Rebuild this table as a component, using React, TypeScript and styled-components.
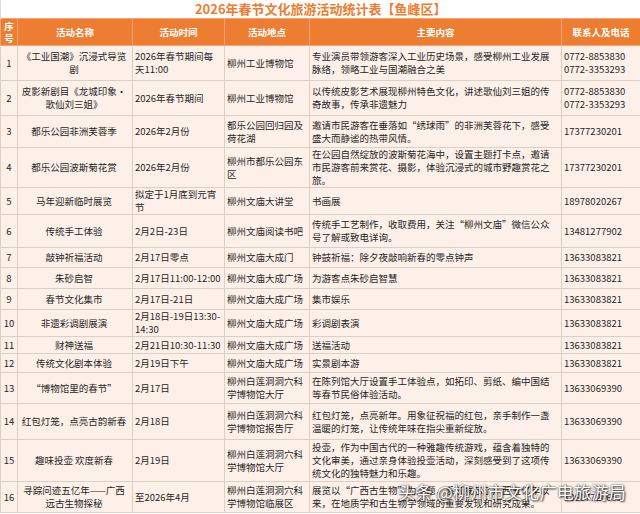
import styled, { createGlobalStyle } from "styled-components";

const GlobalStyle = createGlobalStyle`
  html, body {
    margin: 0;
    padding: 0;
    background: #ffffff;
  }
  body {
    font-family: "Noto Sans CJK SC", "Noto Sans", sans-serif;
  }
`;

const Page = styled.div`
  position: relative;
  width: 640px;
  height: 514px;
  overflow: hidden;
  background: #ffffff;
`;

const Table = styled.table`
  width: 640px;
  table-layout: fixed;
  border-collapse: collapse;
  font-size: 9.5px;
  line-height: 13px;
  color: #262626;
`;

const TitleCell = styled.td`
  height: 18px;
  padding: 0;
  text-align: center;
  font-size: 13px;
  line-height: 18px;
  font-weight: 700;
  color: #ed7d31;
  background: #ffffff;
  border-left: 1px solid #d9d9d9;
`;

const HeadCell = styled.th`
  height: 26px;
  padding: 0 2px;
  background: #ed7d31;
  color: #ffffff;
  font-weight: 700;
  text-align: center;
  vertical-align: middle;
  border: 1px solid #f2a474;
  line-height: 12px;
`;

const Cell = styled.td<{ $align?: "left" | "center"; $tight?: boolean }>`
  padding: ${(p) => (p.$tight ? "0 2px" : "0 4px 0 2px")};
  background: #fdf0e8;
  border: 1px solid #dccfc6;
  text-align: ${(p) => p.$align ?? "left"};
  vertical-align: middle;
  word-break: ${(p) => (p.$tight ? "break-all" : "normal")};
  overflow: hidden;
`;

const Watermark = styled.div`
  position: absolute;
  right: 14px;
  bottom: 12px;
  font-family: "Noto Sans CJK SC", sans-serif;
  font-size: 17px;
  line-height: 20px;
  color: #ffffff;
  letter-spacing: 0.3px;
  text-shadow: 0 0 2px rgba(0, 0, 0, 0.85), 1px 1px 2px rgba(0, 0, 0, 0.7);
  white-space: nowrap;
`;

type Row = {
  h: number;
  name: string;
  time: string;
  place: string;
  content: string;
  phone: string[];
};

const rows: Row[] = [
  {
    h: 35,
    name: "《工业国潮》沉浸式导览剧",
    time: "2026年春节期间每天11:00",
    place: "柳州工业博物馆",
    content: "专业演员带领游客深入工业历史场景，感受柳州工业发展脉络，领略工业与国潮融合之美",
    phone: ["0772-8853830", "0772-3353293"],
  },
  {
    h: 35,
    name: "皮影新剧目《龙城印象·歌仙刘三姐》",
    time: "2026年春节期间",
    place: "柳州工业博物馆",
    content: "以传统皮影艺术展现柳州特色文化，讲述歌仙刘三姐的传奇故事，传承非遗魅力",
    phone: ["0772-8853830", "0772-3353293"],
  },
  {
    h: 32,
    name: "都乐公园非洲芙蓉季",
    time: "2026年2月份",
    place: "都乐公园回归园及荷花湖",
    content: "邀请市民游客在垂落如“绣球雨”的非洲芙蓉花下，感受盛大而静谧的热带风情。",
    phone: ["17377230201"],
  },
  {
    h: 39,
    name: "都乐公园波斯菊花赏",
    time: "2026年2月份",
    place: "柳州市都乐公园东区",
    content: "在公园自然绽放的波斯菊花海中，设置主题打卡点，邀请市民游客前来赏花、摄影，体验沉浸式的城市野趣赏花之旅。",
    phone: ["17377230201"],
  },
  {
    h: 25,
    name: "马年迎新临时展览",
    time: "拟定于1月底到元宵节",
    place: "柳州文庙大讲堂",
    content: "书画展",
    phone: ["18978020267"],
  },
  {
    h: 33,
    name: "传统手工体验",
    time: "2月2日-23日",
    place: "柳州文庙阅读书吧",
    content: "传统手工艺制作，收取费用，关注“柳州文庙”微信公众号了解或致电详询。",
    phone: ["13481277902"],
  },
  {
    h: 20,
    name: "敲钟祈福活动",
    time: "2月17日零点",
    place: "柳州文庙大成门",
    content: "钟鼓祈福：除夕夜敲响新春的零点钟声",
    phone: ["13633083821"],
  },
  {
    h: 21,
    name: "朱砂启智",
    time: "2月17日11:00-12:00",
    place: "柳州文庙大成广场",
    content: "为游客点朱砂启智慧",
    phone: ["13633083821"],
  },
  {
    h: 21,
    name: "春节文化集市",
    time: "2月17日-21日",
    place: "柳州文庙大成广场",
    content: "集市娱乐",
    phone: ["13633083821"],
  },
  {
    h: 27,
    name: "非遗彩调剧展演",
    time: "2月18日-19日13:30-14:30",
    place: "柳州文庙大成广场",
    content: "彩调剧表演",
    phone: ["13633083821"],
  },
  {
    h: 17,
    name: "财神送福",
    time: "2月21日10:30-11:30",
    place: "柳州文庙大成广场",
    content: "送福活动",
    phone: ["13633083821"],
  },
  {
    h: 19,
    name: "传统文化剧本体验",
    time: "2月19日下午",
    place: "柳州文庙大成广场",
    content: "实景剧本游",
    phone: ["13633083821"],
  },
  {
    h: 31,
    name: "“博物馆里的春节”",
    time: "2月17日",
    place: "柳州白莲洞洞穴科学博物馆大厅",
    content: "在陈列馆大厅设置手工体验点，如拓印、剪纸、编中国结等春节民俗体验活动。",
    phone: ["13633069390"],
  },
  {
    h: 36,
    name: "红包灯笼，点亮古韵新春",
    time: "2月18日",
    place: "柳州白莲洞洞穴科学博物馆报告厅",
    content: "红包灯笼，点亮新年。用象征祝福的红包，亲手制作一盏温暖的灯笼，让传统年味在指尖重新绽放。",
    phone: ["13633069390"],
  },
  {
    h: 42,
    name: "趣味投壶 欢度新春",
    time: "2月19日",
    place: "柳州白莲洞洞穴科学博物馆大厅",
    content: "投壶，作为中国古代的一种雅趣传统游戏，蕴含着独特的文化审美，通过亲身体验投壶活动，深刻感受到了这项传统文化的独特魅力和乐趣。",
    phone: ["13633069390"],
  },
  {
    h: 31,
    name: "寻踪问迹五亿年——广西远古生物探秘",
    time: "至2026年4月",
    place: "柳州白莲洞洞穴科学博物馆临展区",
    content: "展览以“广西古生物”为主题，系统展示了广西五亿年以来，在地质学和古生物学领域的重要发现和研究成果。",
    phone: ["13607720651"],
  },
];

export default function App() {
  return (
    <Page>
      <GlobalStyle />
      <Table>
        <colgroup>
          <col style={{ width: 17 }} />
          <col style={{ width: 115 }} />
          <col style={{ width: 92 }} />
          <col style={{ width: 85 }} />
          <col style={{ width: 252 }} />
          <col style={{ width: 79 }} />
        </colgroup>
        <tbody>
          <tr>
            <TitleCell colSpan={6}>2026年春节文化旅游活动统计表【鱼峰区】</TitleCell>
          </tr>
          <tr>
            <HeadCell>序号</HeadCell>
            <HeadCell>活动名称</HeadCell>
            <HeadCell>活动时间</HeadCell>
            <HeadCell>活动地点</HeadCell>
            <HeadCell>主要内容</HeadCell>
            <HeadCell>联系人及电话</HeadCell>
          </tr>
          {rows.map((r, i) => (
            <tr key={i} style={{ height: r.h }}>
              <Cell $align="center" $tight>{i + 1}</Cell>
              <Cell $align="center">{r.name}</Cell>
              <Cell $tight>{r.time}</Cell>
              <Cell>{r.place}</Cell>
              <Cell>{r.content}</Cell>
              <Cell>
                {r.phone.map((p) => (
                  <div key={p}>{p}</div>
                ))}
              </Cell>
            </tr>
          ))}
        </tbody>
      </Table>
      <Watermark>头条 @柳州市文化广电旅游局</Watermark>
    </Page>
  );
}
